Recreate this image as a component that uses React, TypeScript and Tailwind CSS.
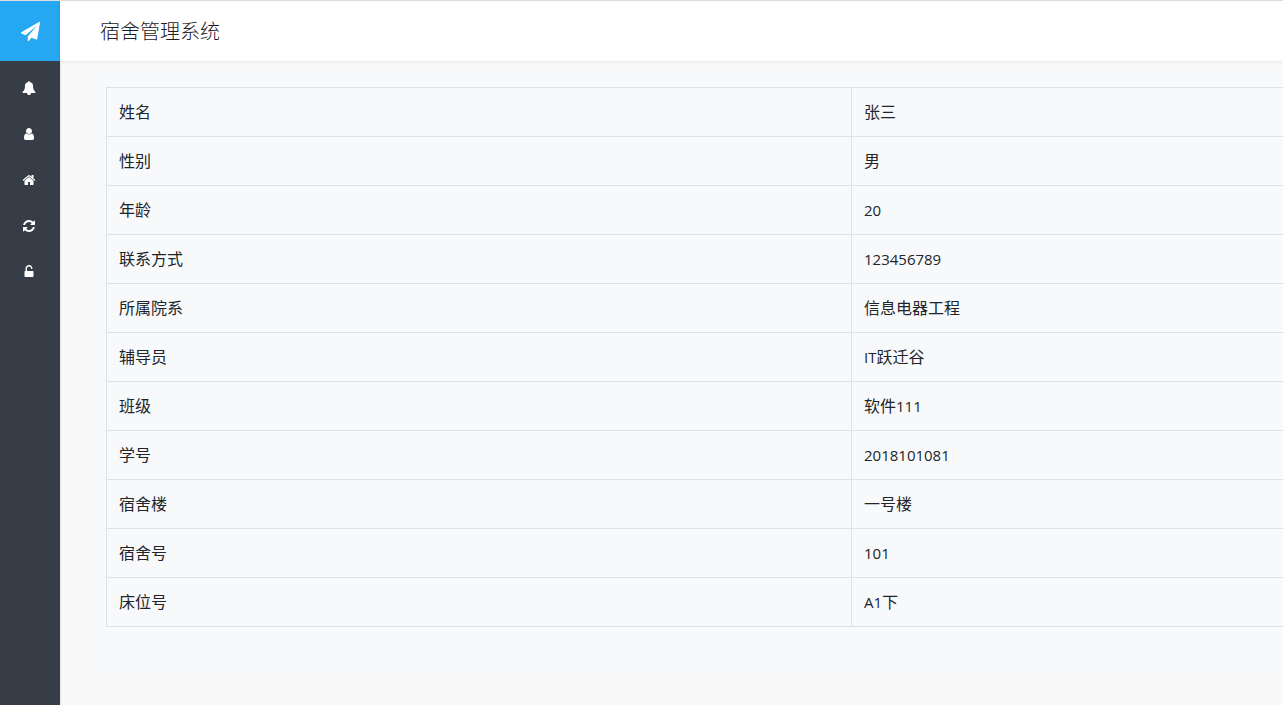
const rows: [string, string][] = [
  ["姓名", "张三"],
  ["性别", "男"],
  ["年龄", "20"],
  ["联系方式", "123456789"],
  ["所属院系", "信息电器工程"],
  ["辅导员", "IT跃迁谷"],
  ["班级", "软件111"],
  ["学号", "2018101081"],
  ["宿舍楼", "一号楼"],
  ["宿舍号", "101"],
  ["床位号", "A1下"],
];

const plane =
  "M1764 11q33 24 27 64l-256 1536q-5 29-32 45-14 8-31 8-11 0-24-5l-453-185-242 295q-18 23-49 23-13 0-22-4-19-7-30.5-23.5t-11.5-36.5v-349l864-1059-1069 925-395-162q-37-14-40-55-2-40 32-59l1664-960q15-9 32-9 20 0 36 11z";

const menu = [
  {
    label: "通知",
    path: "M1728 1408q0 52-38 90t-90 38h-448q0 106-75 181t-181 75-181-75-75-181h-448q-52 0-90-38t-38-90q50-42 91-88t85-119.500 74.500-158.500 50-206 19.500-260q0-152 117-282.500t307-158.500q-8-19-8-39 0-40 28-68t68-28 68 28 28 68q0 20-8 39 190 28 307 158.500t117 282.500q0 139 19.500 260t50 206 74.500 158.500 85 119.500 91 88z",
  },
  {
    label: "个人信息",
    path: "M1536 1399q0 109-62.500 187t-150.500 78h-854q-88 0-150.500-78t-62.500-187q0-85 8.500-160.500t31.500-152 58.500-131 94-89 134.500-34.500q131 128 313 128t313-128q76 0 134.500 34.500t94 89 58.500 131 31.500 152 8.500 160.500zm-256-887q0 159-112.500 271.500t-271.500 112.500-271.500-112.500-112.500-271.500 112.500-271.500 271.500-112.500 271.500 112.500 112.500 271.500z",
  },
  {
    label: "宿舍",
    path: "M1472 992v480q0 26-19 45t-45 19h-384v-384h-256v384h-384q-26 0-45-19t-19-45v-480q0-1 .5-3t.5-3l575-474 575 474q1 2 1 6zm223-69l-62 74q-8 9-21 11h-3q-13 0-21-7l-692-577-692 577q-12 8-24 7-13-2-21-11l-62-74q-8-10-7-23.500t11-21.500l719-599q32-26 76-26t76 26l244 204v-195q0-14 9-23t23-9h192q14 0 23 9t9 23v408l219 182q10 8 11 21.500t-7 23.500z",
  },
  {
    label: "刷新",
    path: "M1639 1056q0 5-1 7-64 268-268 434.500t-478 166.500q-146 0-282.500-55t-243.500-157l-129 129q-19 19-45 19t-45-19-19-45v-448q0-26 19-45t45-19h448q26 0 45 19t19 45-19 45l-137 137q71 66 161 102t187 36q134 0 250-65t186-179q11-17 53-117 8-23 30-23h192q13 0 22.500 9.500t9.500 22.500zm25-800v448q0 26-19 45t-45 19h-448q-26 0-45-19t-19-45 19-45l138-138q-148-137-349-137-134 0-250 65t-186 179q-11 17-53 117-8 23-30 23h-199q-13 0-22.500-9.500t-9.500-22.500v-7q65-268 270-434.500t480-166.500q146 0 284 55.500t245 156.500l130-129q19-19 45-19t45 19 19 45z",
  },
  {
    label: "修改密码",
    path: "M1376 768q40 0 68 28t28 68v576q0 40-28 68t-68 28h-960q-40 0-68-28t-28-68v-576q0-40 28-68t68-28h32v-320q0-185 131.500-316.500t316.500-131.500 316.500 131.500 131.500 316.500q0 26-19 45t-45 19h-64q-26 0-45-19t-19-45q0-106-75-181t-181-75-181 75-75 181v320h736z",
  },
];

function Sidebar() {
  return (
    <aside className="flex w-15 shrink-0 flex-col bg-[#363d47] shadow-[0_0_3px_rgba(0,0,0,0.15)]">
      <a
        href="#"
        aria-label="首页"
        className="flex h-15 items-center justify-center bg-[#25a7f2] text-white"
      >
        <svg viewBox="0 0 1792 1792" className="size-[19px]" fill="currentColor">
          <path d={plane} />
        </svg>
      </a>
      <nav className="flex flex-col pt-1 pr-[2px]">
        {menu.map((item) => (
          <a
            key={item.label}
            href="#"
            aria-label={item.label}
            className="flex h-[46px] items-center justify-center text-white"
          >
            <svg viewBox="0 0 1792 1792" className="size-[14px]" fill="currentColor">
              <path d={item.path} />
            </svg>
          </a>
        ))}
      </nav>
    </aside>
  );
}

/* Latin runs are set one pixel smaller so that they sit evenly beside the Han characters. */
function Mixed({ text }: { text: string }) {
  return (
    <>
      {text.split(/([A-Za-z0-9]+)/).map((part, i) =>
        /^[A-Za-z0-9]/.test(part) ? (
          <span key={i} className="text-[15px]">
            {part}
          </span>
        ) : (
          part
        ),
      )}
    </>
  );
}

export default function App() {
  return (
    <div className="flex min-h-screen overflow-hidden border-t border-[#dcdce0] bg-[#f9f9f9] font-['Open_Sans','Noto_Sans_CJK_SC',sans-serif] text-[#212529]">
      <Sidebar />
      <div className="flex min-w-0 flex-1 flex-col">
        <header className="flex h-15 shrink-0 items-center bg-white pt-[2px] pl-10 shadow-[0_1px_3px_rgba(0,0,0,0.08)]">
          <h1 className="text-xl font-light text-[#1c2026]">宿舍管理系统</h1>
        </header>
        <main className="overflow-hidden pt-[11px] pl-[31px]">
          <div className="w-max bg-[#f8f9fb] px-[15px] pt-[15px] pb-11">
            <table className="w-[1491px] table-fixed border-collapse border border-[#dee2e6]">
              <tbody>
                {rows.map(([name, value]) => (
                  <tr key={name} className="h-[49px]">
                    <th
                      scope="row"
                      className="border border-[#dee2e6] px-3 py-0 text-left text-base font-normal"
                    >
                      {name}
                    </th>
                    <td className="border border-[#dee2e6] px-3 py-0 text-base">
                      <Mixed text={value} />
                    </td>
                  </tr>
                ))}
              </tbody>
            </table>
          </div>
        </main>
      </div>
    </div>
  );
}
